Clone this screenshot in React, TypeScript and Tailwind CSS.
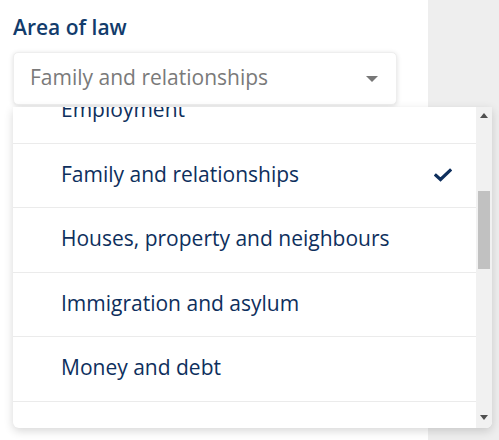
import React from "react";

const items = [
  "Employment",
  "Family and relationships",
  "Houses, property and neighbours",
  "Immigration and asylum",
  "Money and debt",
  "",
];

export default function App() {
  return (
    <div
      className="w-[499px] h-[440px] overflow-hidden flex bg-white"
      style={{ fontFamily: '"Open Sans", sans-serif' }}
    >
      <div className="w-[428px] shrink-0 relative">
        <div className="pl-[13px] pt-[12px]">
          <div className="text-[21px] leading-[30px] font-semibold text-[#123c6c]">
            Area of law
          </div>
          <div className="mt-[10px] w-[384px] h-[53px] rounded-[5px] bg-white shadow-[0_1px_5px_rgba(0,0,0,0.13)] border border-[#eeeeee] flex items-center justify-between pl-[16px] pr-[18px]">
            <span className="text-[21px] text-[#7a7a7a] -mt-[2px]">Family and relationships</span>
            <svg width="12" height="7" viewBox="0 0 12 7" className="mt-[1px]">
              <path d="M0 0 L12 0 L6 6 Z" fill="#777777" />
            </svg>
          </div>
        </div>
      </div>
      <div className="flex-1 bg-[#eeeeee]" />
      <div className="absolute left-[13px] top-[107px] w-[479px] h-[321px] bg-white rounded-b-[6px] shadow-[0_3px_10px_rgba(0,0,0,0.16)] flex overflow-hidden">
        <div className="flex-1 overflow-hidden">
          <div className="-mt-[28px]">
            {items.map((it, i) => (
              <div
                key={i}
                className={`h-[64.5px] flex items-center justify-between pl-[48px] pr-[24px] ${
                  i < items.length - 1 ? "border-b border-[#ebebeb]" : ""
                }`}
              >
                <span className="text-[21px] text-[#0e2f5d] -mt-[2px]">{it}</span>
                {it === "Family and relationships" && (
                  <svg width="18" height="14" viewBox="0 0 18 14">
                    <path
                      d="M2 7.5 L6.5 11.5 L16 2.5"
                      fill="none"
                      stroke="#0e2f5d"
                      strokeWidth="3.2"
                      strokeLinecap="square"
                    />
                  </svg>
                )}
              </div>
            ))}
          </div>
        </div>
        <div className="w-[16px] bg-[#f1f1f1] flex flex-col items-center">
          <div className="h-[17px] flex items-center justify-center">
            <svg width="8" height="5" viewBox="0 0 8 5">
              <path d="M0 5 L8 5 L4 0 Z" fill="#505050" />
            </svg>
          </div>
          <div className="mt-[67px] w-[12px] h-[78px] bg-[#c1c1c1]" />
          <div className="flex-1" />
          <div className="h-[17px] flex items-center justify-center mb-[2px]">
            <svg width="8" height="5" viewBox="0 0 8 5">
              <path d="M0 0 L8 0 L4 5 Z" fill="#505050" />
            </svg>
          </div>
        </div>
      </div>
    </div>
  );
}
